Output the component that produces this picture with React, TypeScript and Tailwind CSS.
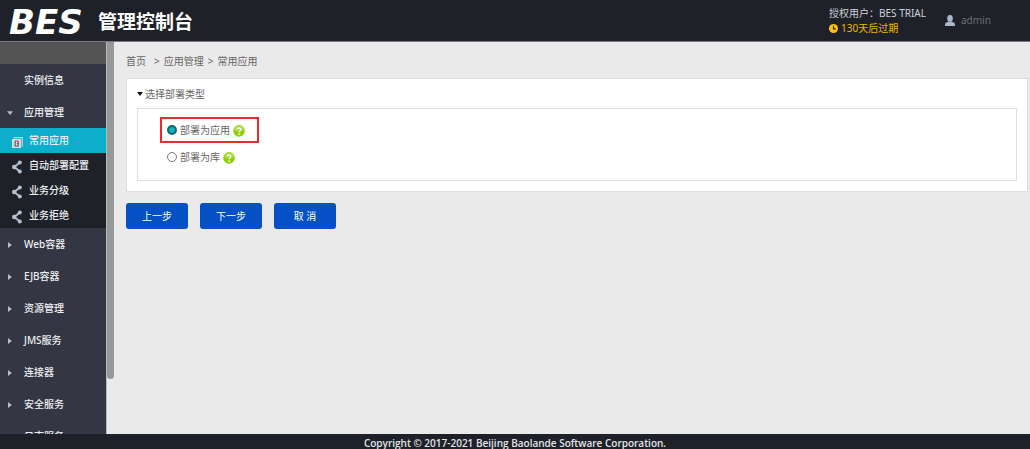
import { useState } from "react";

const SUB_ITEMS = ["常用应用", "自动部署配置", "业务分级", "业务拒绝"];

const BOTTOM_ITEMS = [
  "Web容器",
  "EJB容器",
  "资源管理",
  "JMS服务",
  "连接器",
  "安全服务",
  "日志服务",
];

const DEPLOY_TYPES = [
  { id: "app", label: "部署为应用" },
  { id: "lib", label: "部署为库" },
];

const linkClass =
  "flex h-8 shrink-0 items-center pt-px text-[10px] font-medium text-[#eceef2]";

function Caret({ open = false }: { open?: boolean }) {
  return (
    <svg viewBox="0 0 6 6" className="h-[6px] w-[6px]" fill="#b3bfcc">
      {open ? <path d="M0 1.2h6L3.1 5z" /> : <path d="M1 0v6l3.8-3z" />}
    </svg>
  );
}

function ShareIcon() {
  return (
    <svg viewBox="0 0 10 14" className="h-[14px] w-[10px]">
      <path d="M7.8 2.6 2.2 7l5.6 4.4" fill="none" stroke="#a9b7c9" strokeWidth="2" />
      <circle cx="7.8" cy="2.5" r="2" fill="#b6c2d1" />
      <circle cx="2.2" cy="7" r="2.2" fill="#b6c2d1" />
      <circle cx="7.8" cy="11.5" r="2" fill="#b6c2d1" />
    </svg>
  );
}

function AppIcon() {
  return (
    <svg viewBox="0 0 11 11" className="h-[11px] w-[11px] shrink-0">
      <path d="M1.5.7h8.8v9" fill="none" stroke="#c9cfd4" strokeWidth="1.2" />
      <path d="M0 2h9v9H0z" fill="#d9dcdf" />
      <path d="M2.6 3.6h4.2v6H2.6z" fill="#50616a" />
      <path d="M3.8 4.6h2v1h-1v2h1v1h-2z" fill="#e8eaec" />
    </svg>
  );
}

function HelpIcon() {
  return (
    <svg viewBox="0 0 12 12" className="h-3 w-3">
      <circle cx="6" cy="6" r="5.8" fill="#93cf0d" />
      <path d="M1 5a5 5 0 0 1 10 0c-3 1.6-7 1.6-10 0z" fill="#a9dc3a" />
      <path
        d="M4.2 4.6C4.2 2.4 8 2.5 7.9 4.5 7.8 5.8 6.1 5.8 6.1 7.3"
        fill="none"
        stroke="#fff"
        strokeWidth="1.4"
      />
      <circle cx="6.1" cy="9.1" r=".9" fill="#fff" />
    </svg>
  );
}

function Header() {
  return (
    <header className="flex h-[42px] shrink-0 items-center border-b border-[#777a7e] bg-[#1e2228] pl-[9px] text-white">
      <div className="flex items-center pt-[3px]">
        <span className="w-[89px] font-['DejaVu_Sans'] text-[34px] leading-none font-bold italic">
          BES
        </span>
        <h1 className="text-[19px] leading-none font-bold">管理控制台</h1>
      </div>
      <div className="ml-auto w-[116px] text-[10px] leading-[15px]">
        <p className="text-[#cdd0da]">授权用户：BES TRIAL</p>
        <p className="flex items-center gap-[3px] text-[#f0b400]">
          <svg viewBox="0 0 10 10" className="h-[9px] w-[9px]">
            <circle cx="5" cy="5" r="5" fill="#ffc107" />
            <path d="M5 2v3.4h2.6" fill="none" stroke="#1e2228" strokeWidth="1.2" />
          </svg>
          130天后过期
        </p>
      </div>
      <a href="#admin" className="flex w-[85px] items-center gap-[6px] text-[10px] text-[#6c7075]">
        <svg viewBox="0 0 10 11" className="h-[11px] w-[10px]" fill="#a9b7c9">
          <ellipse cx="5" cy="3.4" rx="2.8" ry="3.4" />
          <path d="M0 11V9.6C0 7.6 2.4 7.3 3.4 6.8h3.2c1 .5 3.4.8 3.4 2.8V11z" />
        </svg>
        admin
      </a>
    </header>
  );
}

function Sidebar() {
  return (
    <nav className="flex w-[106px] shrink-0 flex-col overflow-hidden bg-[#343743]">
      <div className="h-[22px] shrink-0 bg-[#545454]" />
      <a href="#instance" className={`${linkClass} pl-6`}>
        实例信息
      </a>
      <a href="#apps" className={`${linkClass} gap-[11px] pl-[7px]`}>
        <Caret open />
        应用管理
      </a>
      <ul className="shrink-0 bg-[#1e2228]">
        {SUB_ITEMS.map((item, i) => (
          <li key={item}>
            <a
              href={`#sub-${i}`}
              className={`flex h-[25px] items-center gap-[7px] pl-3 text-[10px] font-medium text-[#eceef2] ${
                i === 0 ? "bg-[#0caecb]" : ""
              }`}
            >
              <span className="flex w-[10px] justify-center pt-[3px]">
                {i === 0 ? <AppIcon /> : <ShareIcon />}
              </span>
              {item}
            </a>
          </li>
        ))}
      </ul>
      {BOTTOM_ITEMS.map((item) => (
        <a key={item} href={`#${item}`} className={`${linkClass} gap-[11px] pl-[7px]`}>
          <Caret />
          {item}
        </a>
      ))}
    </nav>
  );
}

export default function App() {
  const [type, setType] = useState("app");

  return (
    <div className="flex h-screen flex-col overflow-hidden bg-[#eaeaea] font-['Noto_Sans','Noto_Sans_CJK_SC',sans-serif]">
      <Header />
      <div className="flex min-h-0 flex-1">
        <Sidebar />
        <div className="w-2 shrink-0 border-l border-[#b9b9b9]">
          <div className="h-[86%] rounded-b-full bg-[#989898]" />
        </div>
        <main className="min-w-0 flex-1 pt-3 pr-[2px] pl-3 text-[10px] leading-[14px] text-[#666]">
          <div className="flex gap-1">
            <a href="#home" className="mr-1">首页</a>
            <span>&gt;</span>
            <a href="#apps">应用管理</a>
            <span>&gt;</span>
            <a href="#common">常用应用</a>
          </div>

          <section className="mt-[10px] border border-[#dcdee2] bg-white px-[10px] pt-2 pb-[10px]">
            <h2 className="flex items-center gap-[2px]">
              <svg viewBox="0 0 6 4" className="h-1 w-[6px]" fill="#111">
                <path d="M0 0h6L3 4z" />
              </svg>
              选择部署类型
            </h2>
            <div className="mt-[7px] flex flex-col items-start gap-px border border-[#dddee0] pt-2 pb-[10px] pl-[22px]">
              {DEPLOY_TYPES.map((t) => (
                <div
                  key={t.id}
                  className={`flex h-[26px] items-center border-2 pr-3 pl-[5px] ${
                    t.id === "app" ? "border-[#f0282d]" : "border-transparent"
                  }`}
                >
                  <input
                    id={t.id}
                    type="radio"
                    name="deployType"
                    checked={type === t.id}
                    onChange={() => setType(t.id)}
                    className="h-[10px] w-[10px] appearance-none rounded-full border border-[#777] bg-white checked:border-2 checked:border-[#17656c] checked:bg-[#0cb0bf]"
                  />
                  <label htmlFor={t.id} className="ml-[3px]">
                    {t.label}
                  </label>
                  <span className="ml-[3px] pt-[2px]">
                    <HelpIcon />
                  </span>
                </div>
              ))}
            </div>
          </section>

          <div className="mt-[11px] flex gap-3 text-white">
            {["上一步", "下一步", "取 消"].map((label) => (
              <button key={label} type="button" className="h-[26px] w-[62px] rounded-[3px] bg-[#0450c5]">
                {label}
              </button>
            ))}
          </div>
        </main>
      </div>
      <footer className="h-[15px] shrink-0 bg-[#1e2228] text-center font-['Open_Sans','Noto_Sans',sans-serif] text-[10px] leading-[18px] font-semibold text-[#e2e4e8]">
        Copyright © 2017-2021 Beijing Baolande Software Corporation.
      </footer>
    </div>
  );
}
